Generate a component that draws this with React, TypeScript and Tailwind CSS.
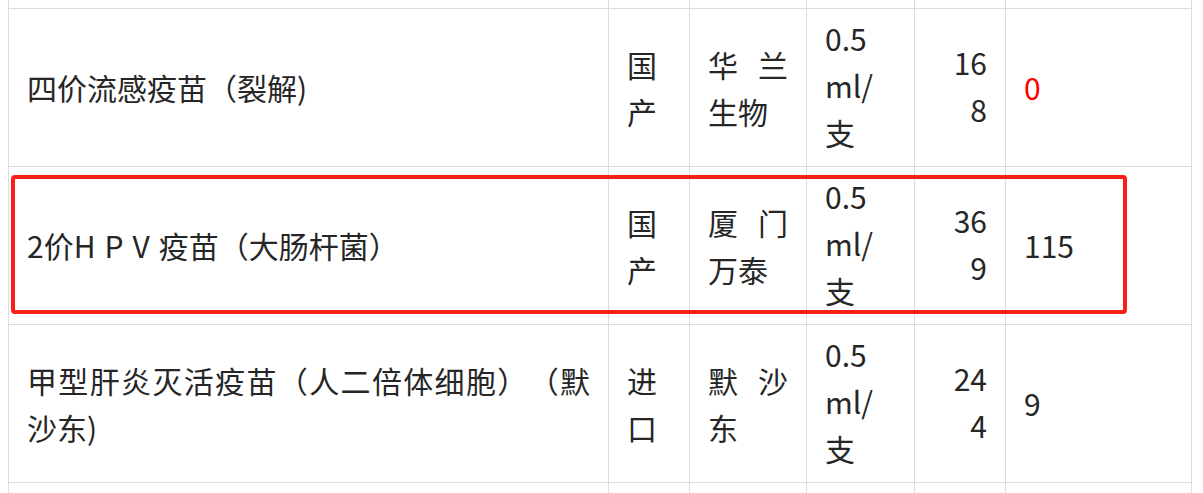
const rows = [
  {
    name: <>四价流感疫苗（裂解)</>,
    origin: "国产",
    maker: "华兰生物",
    price: ["16", "8"],
    stock: "0",
    stockRed: true,
  },
  {
    name: (
      <>
        2价<span className="tracking-[9px]">HPV</span>疫苗（大肠杆菌）
      </>
    ),
    origin: "国产",
    maker: "厦门万泰",
    price: ["36", "9"],
    stock: "115",
    stockRed: false,
  },
  {
    name: <>甲型肝炎灭活疫苗（人二倍体细胞）（默沙东)</>,
    origin: "进口",
    maker: "默沙东",
    price: ["24", "4"],
    stock: "9",
    stockRed: false,
  },
];

const cell = "border-l border-t border-[#dcdcdc]";
const body = `${cell} h-[158px] flex items-center px-[18px]`;

function EdgeRow({ h }: { h: string }) {
  return (
    <>
      {[0, 1, 2, 3, 4, 5].map((i) => (
        <div key={i} className={`border-l border-[#dcdcdc] ${h} ${h === "h-[8px]" ? "" : "border-t"}`} />
      ))}
    </>
  );
}

export default function App() {
  return (
    <div className="relative h-[493px] w-[1203px] overflow-hidden bg-white font-['Noto_Sans_CJK_SC',sans-serif] text-[30px] leading-[47px] text-[#262626] [text-spacing-trim:space-all]">
      <div className="ml-[8px] grid w-[1184px] grid-cols-[600px_81px_117px_108px_91px_186px] border-r border-[#dcdcdc]">
        <EdgeRow h="h-[8px]" />
        {rows.map((r, i) => (
          <div key={i} className="contents">
            <div className={body}>
              <div className="w-full text-justify">{r.name}</div>
            </div>
            <div className={body}>
              <div className="w-full">{r.origin}</div>
            </div>
            <div className={body}>
              <div className="w-full text-justify">{r.maker}</div>
            </div>
            <div className={body}>
              <div className="w-full -mt-[4px]">
                0.5
                <br />
                ml/
                <br />
                支
              </div>
            </div>
            <div className={body}>
              <div className="w-full text-right -mt-[4px]">
                {r.price[0]}
                <br />
                {r.price[1]}
              </div>
            </div>
            <div className={body}>
              <div className={`w-full ${r.stockRed ? "text-[#ff0000]" : ""}`}>{r.stock}</div>
            </div>
          </div>
        ))}
        <EdgeRow h="h-[40px]" />
      </div>

      {/* highlight around the HPV row */}
      <div className="pointer-events-none absolute left-[11px] top-[175px] h-[139px] w-[1116px] rounded-[4px] border-[4px] border-[#f81f16]" />
    </div>
  );
}
